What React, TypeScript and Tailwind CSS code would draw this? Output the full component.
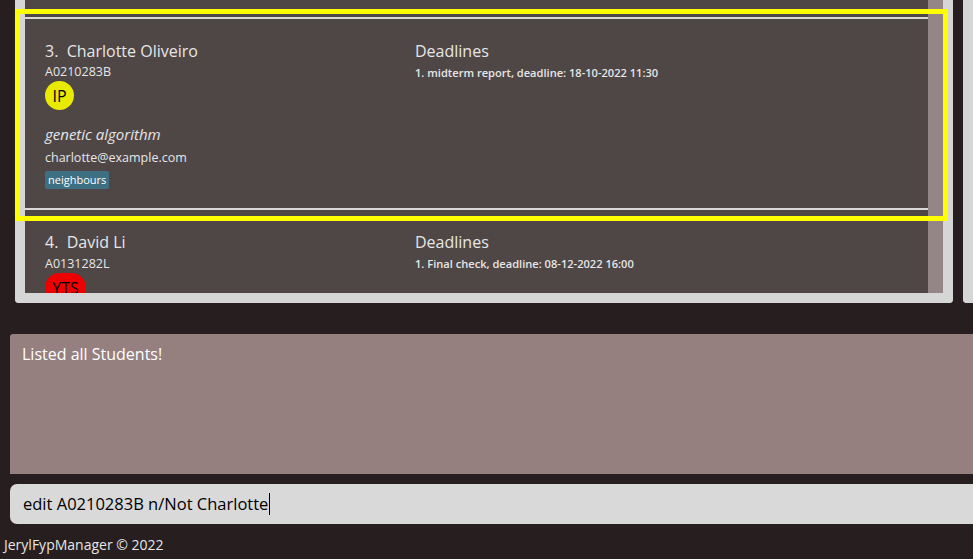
import React from "react";

type Student = {
  idx: number;
  name: string;
  id: string;
  status: string;
  statusClass: string;
  project?: string;
  email?: string;
  tags?: string[];
  deadlines: string[];
};

const students: Student[] = [
  {
    idx: 3,
    name: "Charlotte Oliveiro",
    id: "A0210283B",
    status: "IP",
    statusClass: "w-[29px] bg-[#eaea00]",
    project: "genetic algorithm",
    email: "charlotte@example.com",
    tags: ["neighbours"],
    deadlines: ["midterm report, deadline: 18-10-2022 11:30"],
  },
  {
    idx: 4,
    name: "David Li",
    id: "A0131282L",
    status: "YTS",
    statusClass: "w-[41px] bg-[#ee0000]",
    deadlines: ["Final check, deadline: 08-12-2022 16:00"],
  },
];

function StudentCard({ s, first }: { s: Student; first: boolean }) {
  return (
    <div
      className={
        first
          ? "flex border-y-2 border-[#d9d9d9] pl-5 pt-[22px] pb-[19px]"
          : "flex pl-5 pt-[22px] pb-6"
      }
    >
      <div className="w-[370px] shrink-0">
        <div className="text-[16px] leading-[20px] text-[#e6e6e6]">
          {s.idx}.&nbsp; {s.name}
        </div>
        <div className={(first ? "mt-[3px]" : "mt-[4px]") + " text-[12.5px] leading-[16px] text-[#e6e6e6]"}>
          {s.id}
        </div>
        <div
          className={
            "mt-px h-[29px] rounded-full flex items-center justify-center text-[16px] text-black " +
            s.statusClass
          }
        >
          {s.status}
        </div>
        {s.project && (
          <div className="mt-[14px] text-[15px] leading-[20px] italic text-[#e6e6e6]">{s.project}</div>
        )}
        {s.email && (
          <div className="mt-[6px] text-[12.5px] leading-[16px] text-[#e6e6e6]">{s.email}</div>
        )}
        {s.tags && (
          <div className="mt-[5px] flex gap-1">
            {s.tags.map((t) => (
              <span
                key={t}
                className="h-[18px] px-[3px] rounded-[2px] bg-[#3f6f82] text-[11px] leading-[18px] text-white"
              >
                {t}
              </span>
            ))}
          </div>
        )}
      </div>
      <div className="flex-1">
        <div className="text-[16px] leading-[20px] text-[#e6e6e6]">Deadlines</div>
        <div className="mt-1">
          {s.deadlines.map((d, i) => (
            <div key={d} className="text-[11.1px] leading-[16px] font-semibold text-[#e6e6e6]">
              {i + 1}. {d}
            </div>
          ))}
        </div>
      </div>
    </div>
  );
}

export default function App() {
  return (
    <div
      className="relative w-[973px] h-[559px] overflow-hidden bg-[#261e1f]"
      style={{ fontFamily: '"Segoe UI", "Open Sans", sans-serif' }}
    >
      {/* list panels */}
      <div className="flex h-[303px]">
        <div className="ml-[15px] w-[940px] flex border-x-[10px] border-b-[10px] border-[#d6d6d6] rounded-b-[4px] overflow-hidden">
          <div className="flex-1 bg-[#4f4646] overflow-hidden">
            <div className="h-[17px]" />
            {students.map((s, i) => (
              <StudentCard key={s.id} s={s} first={i === 0} />
            ))}
          </div>
          <div className="w-[15px] bg-[#948686]" />
        </div>
        <div className="ml-[10px] flex-1 border-l-[10px] border-b-[10px] border-[#d6d6d6] rounded-bl-[4px] bg-[#d6d6d6]" />
      </div>

      {/* selected cell highlight */}
      <div className="absolute left-[15px] top-[9px] w-[933px] h-[212px] border-[5px] border-[#ffff00]" />

      {/* result display */}
      <div className="ml-[10px] mt-[31px] h-[140px] rounded-tl-[3px] bg-[#967f7f] px-3 pt-[9px] text-[16px] leading-[22px] text-white">
        Listed all Students!
      </div>

      {/* command box */}
      <div className="ml-[10px] mt-[10px] h-[40px] rounded-l-[7px] bg-[#d9d9d9] pl-[13px] flex items-center text-[16.5px] text-black">
        <span>edit A0210283B n/Not Charlotte</span>
        <span className="ml-px w-px h-[22px] bg-black" />
      </div>

      {/* footer */}
      <div className="pl-1 pt-[11px] text-[14px] leading-[20px] text-[#e6e6e6]">JerylFypManager © 2022</div>
    </div>
  );
}
